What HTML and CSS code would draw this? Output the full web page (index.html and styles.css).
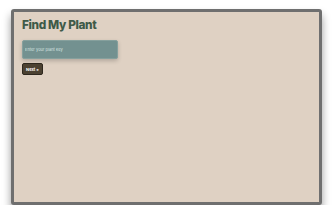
FILE: index.html
```html
<!DOCTYPE html>
<html lang="en">
<head>
    <meta charset="UTF-8">
    <meta name="viewport" content="width=device-width, initial-scale=1.0">
    <title>Find My Plant</title>
    <link rel="stylesheet" href="styles.css">
</head>
<body>
    <div class="window">
        <h1>Find My Plant</h1>
        <input type="text" class="plant-key" placeholder="Enter your plant key">
        <button class="next">Next &raquo;</button>
    </div>
</body>
</html>
```

FILE: styles.css
```css
body {
    background-color: #ffffff;
    font-family: Inter, "Liberation Sans", sans-serif;
    margin: 0;
    padding: 9px 11px 0 11px;
}

.window {
    box-sizing: border-box;
    background-color: #dfd1c3;
    border: 3px solid #6f6f6f;
    border-radius: 3px;
    box-shadow: 0 6px 9px rgba(0, 0, 0, 0.4);
    height: 196px;
    padding: 6px 8px;
    display: flex;
    flex-direction: column;
    align-items: flex-start;
}

h1 {
    color: #3e5a48;
    font-size: 11.8px;
    line-height: 15px;
    font-weight: 800;
    letter-spacing: -0.35px;
    margin: 0 0 7px 0;
}

.plant-key {
    width: 96px;
    height: 19px;
    box-sizing: border-box;
    background-color: #739190;
    border: 1px solid #86a09d;
    border-radius: 2px;
    box-shadow: 0 2px 4px rgba(0, 0, 0, 0.2);
    padding: 0 2px;
    font-family: Inter, "Liberation Sans", sans-serif;
    font-size: 4px;
    color: #dfe8e4;
    margin-bottom: 4px;
}

.plant-key::placeholder {
    color: #d8e4e0;
}

.next {
    width: 21px;
    height: 12px;
    padding: 0;
    background-color: #4b4131;
    border: 1px solid #2e281e;
    border-radius: 2px;
    color: #ffffff;
    font-family: Inter, "Liberation Sans", sans-serif;
    font-size: 4px;
    font-weight: 700;
}
```
